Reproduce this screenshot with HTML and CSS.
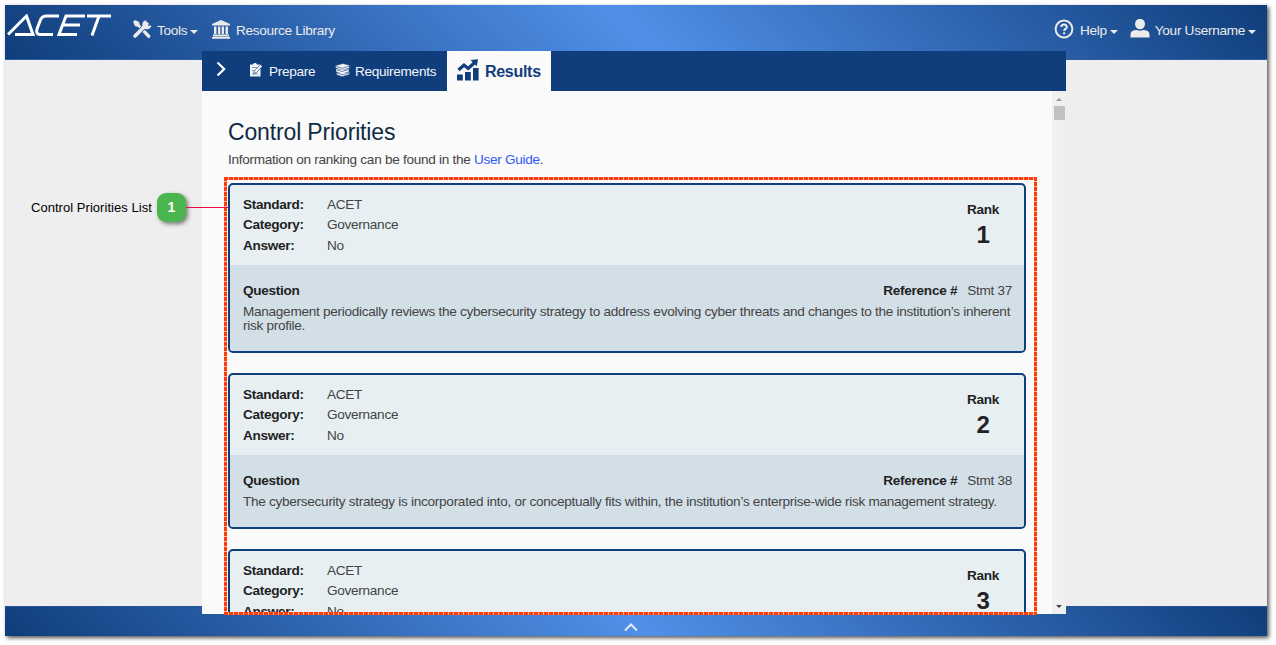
FILE: index.html
```html
<!DOCTYPE html>
<html lang="en">
<head>
<meta charset="utf-8">
<title>ACET - Control Priorities</title>
<link rel="stylesheet" href="styles.css">
</head>
<body>
<div class="app">
  <header class="topbar">
    <svg class="logo" width="104" height="22" viewBox="0 0 104 22" role="img" aria-label="ACET" fill="none" stroke="#fff" stroke-width="3">
      <path d="M1 20.500 19.500 2l6.500 18.500H8"/>
      <path d="M52 2H39c-3 0-5 2-6 5l-3 8c-1 3.500 0 5.500 3 5.500h13"/>
      <path d="M78 2H59l-7 18.500h18M56 11h17M80 2h24M92 2l-7 19.500"/>
    </svg>
    <nav class="menu">
      <a class="item tools"><svg width="20" height="20" viewBox="0 0 20 20"><path d="M1 3 3 1l4 2 1 3 10 10c1.500 2-1 4-2.500 2.500L6 8 3 7z" fill="#ebebeb"/><path d="M3 17 15 5" stroke="#26569c" stroke-width="5"/><path d="m3 17 12-12" stroke="#ebebeb" stroke-width="3.600" stroke-linecap="round"/><path d="M14.500 1.200a4.500 4.500 0 1 0 4.800 5l-3 .8-2.300-2.200z" fill="#ebebeb"/></svg><span>Tools</span><i class="caret"></i></a>
      <a class="item library"><svg width="18" height="19" viewBox="0 0 18 19" fill="#ebebeb"><path d="M9 0 18 4v1.500H0V4zM2 6.500h2.500V14H2zM6 6.500h2.300V14H6zM9.700 6.500H12V14H9.700zM13.500 6.500H16V14h-2.500zM1 14.500h16v2H1zM0 17h18v1.800H0z"/></svg><span>Resource Library</span></a>
    </nav>
    <nav class="menu account">
      <a class="item help"><svg width="20" height="20" viewBox="0 0 20 20" fill="none" stroke="#ebebeb" stroke-width="2"><circle cx="10" cy="10" r="8.400"/><path d="M7.200 8c0-3.400 5.600-3.400 5.600 0 0 1.900-2.600 1.900-2.700 4"/><path d="M10.100 13.300v2"/></svg><span>Help</span><i class="caret"></i></a>
      <a class="item user"><svg width="20" height="19" viewBox="0 0 20 19" fill="#ebebeb"><ellipse cx="10" cy="5" rx="5" ry="5.200"/><path d="M.5 18.500v-3C.5 11.500 5 11 7 11q3 1.500 6 0c2 0 6.500.5 6.500 4.500v3z"/></svg><span>Your Username</span><i class="caret"></i></a>
    </nav>
  </header>

  <main class="panel">
    <nav class="tabs">
      <svg class="expand" width="10" height="16" viewBox="0 0 10 16" fill="none" stroke="#fff" stroke-width="2.200"><path d="m1.500 1.500 6.700 6.500-6.700 6.500"/></svg>
      <a class="tab prepare"><svg width="14" height="14" viewBox="0 0 14 14"><path d="M1 1.500h3l1-1.500h2l1 1.500h3.500V13.500H1z" fill="#f0f3f7"/><path d="M3 4.500h5M3 7.500h2M3 11h6" stroke="#8aa2c6"/><path d="m4.700 10.500.7-2.500 6-6.500 2 1.800-6 6.300z" fill="#fff" stroke="#103d7b" stroke-width=".7"/></svg><span>Prepare</span></a>
      <a class="tab requirements"><svg width="15" height="14" viewBox="0 0 15 14" fill="#f4f6fa" stroke="#103d7b" stroke-width=".6"><path d="M2 8 9 7l5.500 1.500v3L7 13.800l-5.500-2z"/><path d="M1 5.500 8 4l6 2v3l-7 2-6-2z"/><path d="M.5 2.500 8 .5l6.500 1.700v3L7 7.300.5 5z"/><path d="m1 3.500 6 1.800 7-2.100M2 6.800l5 1.700 6-1.800M2.500 10l4.800 1.800L14 10"/></svg><span>Requirements</span></a>
      <a class="tab results"><svg width="22" height="22" viewBox="0 0 22 22" fill="#103d7b"><path d="M0 15.500h5.800v6H0zM8 13h5.800v8.500H8zM16 9h5.600v12.500H16z"/><path d="m1.500 11 5.500-5 4.200 3.400 6.300-5.700" fill="none" stroke="#103d7b" stroke-width="3.200"/><path d="m13.500 1 7.500-.8-1.200 7z"/></svg><span>Results</span></a>
    </nav>
    <div class="viewport">
      <section class="content">
        <h1>Control Priorities</h1>
        <p class="intro">Information on ranking can be found in the <a>User Guide</a>.</p>
        <article class="card tall">
          <div class="summary">
            <dl><dt>Standard:</dt><dd>ACET</dd><dt>Category:</dt><dd>Governance</dd><dt>Answer:</dt><dd>No</dd></dl>
            <div class="rank"><b>Rank</b><strong>1</strong></div>
          </div>
          <div class="detail">
            <div class="detail-head"><b>Question</b><span class="reference"><b>Reference #</b><span>Stmt 37</span></span></div>
            <p>Management periodically reviews the cybersecurity strategy to address evolving cyber threats and changes to the institution’s inherent<br>risk profile.</p>
          </div>
        </article>
        <article class="card short">
          <div class="summary">
            <dl><dt>Standard:</dt><dd>ACET</dd><dt>Category:</dt><dd>Governance</dd><dt>Answer:</dt><dd>No</dd></dl>
            <div class="rank"><b>Rank</b><strong>2</strong></div>
          </div>
          <div class="detail">
            <div class="detail-head"><b>Question</b><span class="reference"><b>Reference #</b><span>Stmt 38</span></span></div>
            <p>The cybersecurity strategy is incorporated into, or conceptually fits within, the institution’s enterprise-wide risk management strategy.</p>
          </div>
        </article>
        <article class="card tall">
          <div class="summary">
            <dl><dt>Standard:</dt><dd>ACET</dd><dt>Category:</dt><dd>Governance</dd><dt>Answer:</dt><dd>No</dd></dl>
            <div class="rank"><b>Rank</b><strong>3</strong></div>
          </div>
        </article>
      </section>
      <div class="scrollbar"><i class="up"></i><i class="thumb"></i><i class="down"></i></div>
    </div>
  </main>

  <footer class="bottombar"><svg width="14" height="9" viewBox="0 0 14 9" fill="none" stroke="#e4ebf7" stroke-width="2"><path d="m1 7.500 6-6 6 6"/></svg></footer>
</div>
<div class="highlight"></div>
<div class="callout"><span>Control Priorities List</span><b>1</b><i></i></div>
</body>
</html>
```

FILE: styles.css
```css
* { box-sizing: border-box; }
body { margin: 0; height: 645px; padding: 5px; overflow: hidden; background: #fff; font: 13.600px/20px "Liberation Sans", Arial, sans-serif; letter-spacing: -.29px; color: #444; position: relative; }
.app { width: 1262px; height: 631px; background: #eee; box-shadow: 2px 2px 4px #555; display: flex; flex-direction: column; }
.topbar { flex: none; height: 55px; margin-bottom: -9px; padding-left: 2px; background: linear-gradient(45deg, #103d7b, #5090e8 50%, #103d7b); border-bottom: 1px solid #2c5ea5; display: flex; color: #ebebeb; }
.logo { margin: 9px 0 0 0; }
.menu { display: flex; padding: 14px 0 0 21px; height: 40px; }
.item { display: flex; align-items: flex-start; }
.item span { padding-top: 2px; white-space: nowrap; }
.tools svg { margin: 0 5px 0 0; }
.tools { width: 80px; }
.library svg { margin: 1px 6px 0 0; }
.account { margin-left: auto; padding-right: 11px; }
.help svg { margin-right: 6px; }
.user { margin-left: 12px; }
.user svg { margin-right: 5px; }
.caret { border: solid transparent; border-width: 4px 4px 0; border-top-color: #ebebeb; margin: 11px 0 0 3px; }
.panel { width: 864px; height: 563px; margin-left: 197px; background: #fafafa; display: flex; flex-direction: column; z-index: 1; }
.tabs { height: 40px; flex: none; background: #103d7b; display: flex; color: #f4f6fa; }
.expand { margin: 10px 0 0 14px; }
.tab { display: flex; align-items: flex-start; }
.tab span { padding-top: 11px; }
.prepare { margin-left: 23px; width: 87px; }
.prepare svg { margin: 12px 6px 0 0; }
.requirements svg { margin: 12px 5px 0 -1px; }
.requirements { width: 111px; }
.results { background: #fafafa; width: 104px; color: #103d7b; font-weight: bold; font-size: 16px; padding-left: 10px; }
.results svg { margin: 8px 6px 0 0; }
.viewport { flex: 1; display: flex; overflow: hidden; }
.content { width: 850px; padding: 30px 26px 0; overflow: hidden; height: 523px; }
h1 { margin: 0; font: 23px/22px "Liberation Sans", Arial, sans-serif; letter-spacing: -.15px; color: #112a44; }
.intro { margin: 7px 0 13px; }
.intro a { color: #3258f5; }
.card { width: 798px; border: 2px solid #103d7b; border-radius: 5px; background: #e7eff3; margin-bottom: 20px; overflow: hidden; }
.tall { height: 170px; }
.short { height: 156px; }
.summary { height: 80px; padding: 10px 25px 0 13px; display: flex; justify-content: space-between; }
dl { display: grid; grid-template-columns: 84px 120px; grid-auto-rows: 20.300px; margin: 0; }
dt, .card b, .card strong { color: #222; font-weight: bold; }
dd { margin: 0; }
.rank { display: flex; flex-direction: column; align-items: center; padding-top: 5px; }
.rank strong { font-size: 24px; line-height: 28px; margin-top: 1px; }
.detail { background: #d2dfe7; height: 100px; padding: 16px 12px 0 13px; }
.detail-head { display: flex; justify-content: space-between; }
.reference { display: flex; gap: 10px; }
.detail p { margin: 4px 0 0; line-height: 14px; white-space: nowrap; }
.scrollbar { width: 14px; height: 523px; background: #f0f0f0; display: flex; flex-direction: column; align-items: center; flex: none; }
.up { border: solid transparent; border-width: 0 3px 3px; border-bottom-color: #999; margin-top: 7px; }
.thumb { width: 11px; height: 14px; background: #c1c1c1; margin-top: 5px; }
.down { border: solid transparent; border-width: 3px 3px 0; border-top-color: #444; margin: auto 0 6px; }
.bottombar { height: 30px; flex: none; margin-top: -8px; background: linear-gradient(45deg, #103d7b, #5090e8 50%, #103d7b); border-top: 1px solid #245499; display: flex; justify-content: center; padding: 16px 10px 0 0; }
.highlight { position: absolute; z-index: 2; left: 224px; top: 177px; width: 813px; height: 438px; background: repeating-linear-gradient(90deg, #ff3b08 0 4px, #ffb5a2 4px 5px) 0 0/100% 3px no-repeat, repeating-linear-gradient(90deg, #ff3b08 0 4px, #ffb5a2 4px 5px) 0 100%/100% 3px no-repeat, repeating-linear-gradient(#ff3b08 0 4px, #ffb5a2 4px 5px) 0 0/3px 100% no-repeat, repeating-linear-gradient(#ff3b08 0 4px, #ffb5a2 4px 5px) 100% 0/3px 100% no-repeat; }
.callout { position: absolute; z-index: 3; left: 31px; top: 193px; width: 197px; display: flex; align-items: center; color: #000; font-size: 13px; letter-spacing: .04px; }
.callout span { width: 126px; white-space: nowrap; }
.callout b { width: 29px; height: 29px; border-radius: 9px; background: #4bb54f; color: #fff; line-height: 29px; text-align: center; font-size: 14px; box-shadow: 2px 2px 4px #777; flex: none; }
.callout i { flex: 1; height: 1px; background: #ee0a45; }
```
